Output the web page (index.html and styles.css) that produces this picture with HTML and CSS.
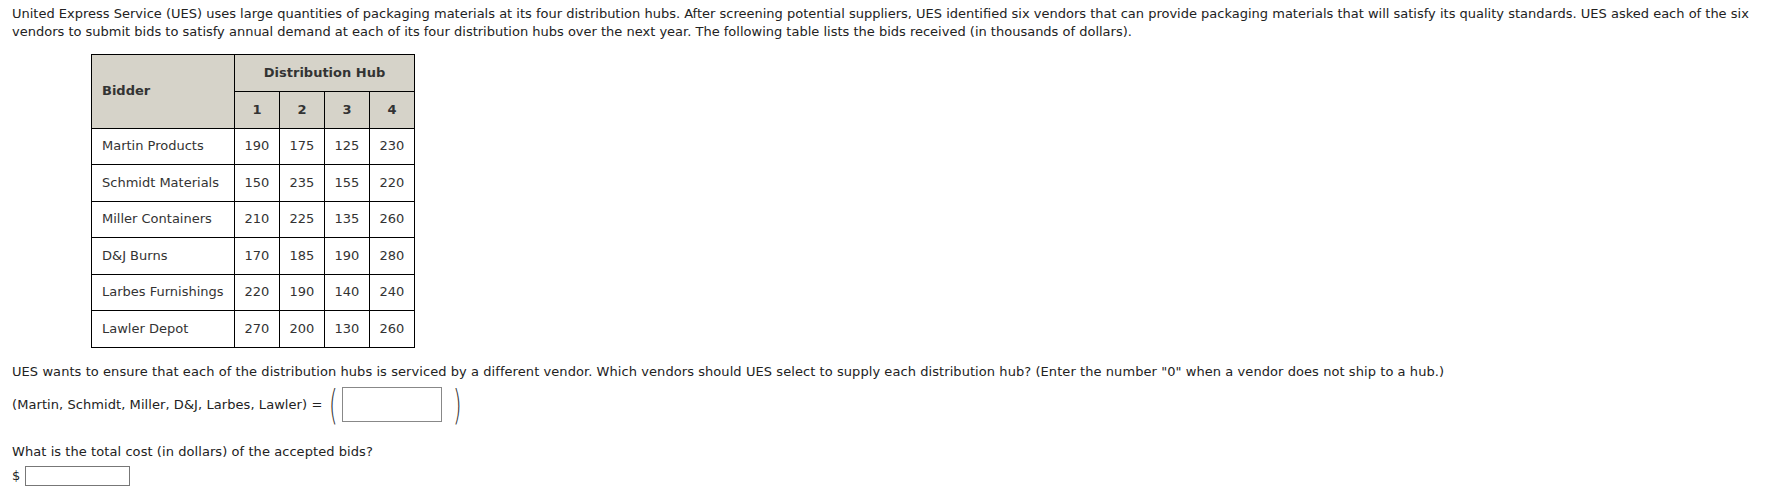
FILE: index.html
```html
<!DOCTYPE html>
<html>
<head>
<meta charset="utf-8">
<link rel="stylesheet" href="styles.css">
</head>
<body>
<div class="page">
  <p class="intro">United Express Service (UES) uses large quantities of packaging materials at its four distribution hubs. After screening potential suppliers, UES identified six vendors that can provide packaging materials that will satisfy its quality standards. UES asked each of the six vendors to submit bids to satisfy annual demand at each of its four distribution hubs over the next year. The following table lists the bids received (in thousands of dollars).</p>
  <table class="bids">
    <thead>
      <tr class="top">
        <th rowspan="2" class="bidder-h">Bidder</th>
        <th colspan="4" class="hub-h">Distribution Hub</th>
      </tr>
      <tr class="nums">
        <th>1</th><th>2</th><th>3</th><th>4</th>
      </tr>
    </thead>
    <tbody>
      <tr><td class="name">Martin Products</td><td>190</td><td>175</td><td>125</td><td>230</td></tr>
      <tr><td class="name">Schmidt Materials</td><td>150</td><td>235</td><td>155</td><td>220</td></tr>
      <tr><td class="name">Miller Containers</td><td>210</td><td>225</td><td>135</td><td>260</td></tr>
      <tr><td class="name">D&amp;J Burns</td><td>170</td><td>185</td><td>190</td><td>280</td></tr>
      <tr><td class="name">Larbes Furnishings</td><td>220</td><td>190</td><td>140</td><td>240</td></tr>
      <tr><td class="name">Lawler Depot</td><td>270</td><td>200</td><td>130</td><td>260</td></tr>
    </tbody>
  </table>
  <p class="q1">UES wants to ensure that each of the distribution hubs is serviced by a different vendor. Which vendors should UES select to supply each distribution hub? (Enter the number "0" when a vendor does not ship to a hub.)</p>
  <div class="answer-row">
    <span class="label">(Martin, Schmidt, Miller, D&amp;J, Larbes, Lawler) =</span>
    <span class="paren">(</span>
    <span class="box"></span>
    <span class="paren right">)</span>
  </div>
  <p class="q2">What is the total cost (in dollars) of the accepted bids?</p>
  <div class="cost-row">
    <span class="dollar">$</span>
    <span class="cost-box"></span>
  </div>
</div>
</body>
</html>
```

FILE: styles.css
```css
html, body {
  margin: 0;
  padding: 0;
  background: #fff;
}
.page {
  padding: 5px 12px 0 12px;
  font-family: "DejaVu Sans", Verdana, sans-serif;
  font-size: 13px;
  line-height: 18px;
  color: #222;
  letter-spacing: 0.07px;
}
.intro {
  margin: 0;
  letter-spacing: 0;
}
.bids {
  border-collapse: collapse;
  margin: 13px 0 0 79px;
  border: 1px solid #000;
}
.bids th, .bids td {
  border: 1px solid #000;
  padding: 0;
  height: 35.5px;
  text-align: center;
  font-size: 13px;
  letter-spacing: 0;
}
.bids tr.top th {
  height: 36px;
}
.bids th {
  background: #d6d3c9;
  color: #333;
  font-weight: bold;
}
.bids .bidder-h {
  text-align: left;
  padding-left: 10px;
  width: 132px;
}
.bids .nums th {
  width: 44px;
}
.bids td.name {
  text-align: left;
  padding-left: 10px;
}
.bids td {
  color: #333;
}
.q1 {
  margin: 15px 0 0 0;
}
.answer-row {
  display: flex;
  align-items: center;
  margin-top: 3px;
  height: 42px;
}
.label {
  margin-right: 5px;
}
.paren {
  display: inline-block;
  width: 9px;
  font-size: 40px;
  line-height: 42px;
  font-weight: 200;
  color: #333;
  transform: scaleX(0.55);
  text-align: center;
}
.box {
  display: inline-block;
  width: 98px;
  height: 33px;
  border: 1px solid #888;
  margin-left: 6px;
  margin-right: 9px;
}
.q2 {
  margin: 17px 0 0 0;
}
.cost-row {
  display: flex;
  align-items: center;
  margin-top: 5px;
}
.dollar {
  margin-right: 5px;
}
.cost-box {
  display: inline-block;
  width: 103px;
  height: 18px;
  border: 1px solid #777;
}
```
